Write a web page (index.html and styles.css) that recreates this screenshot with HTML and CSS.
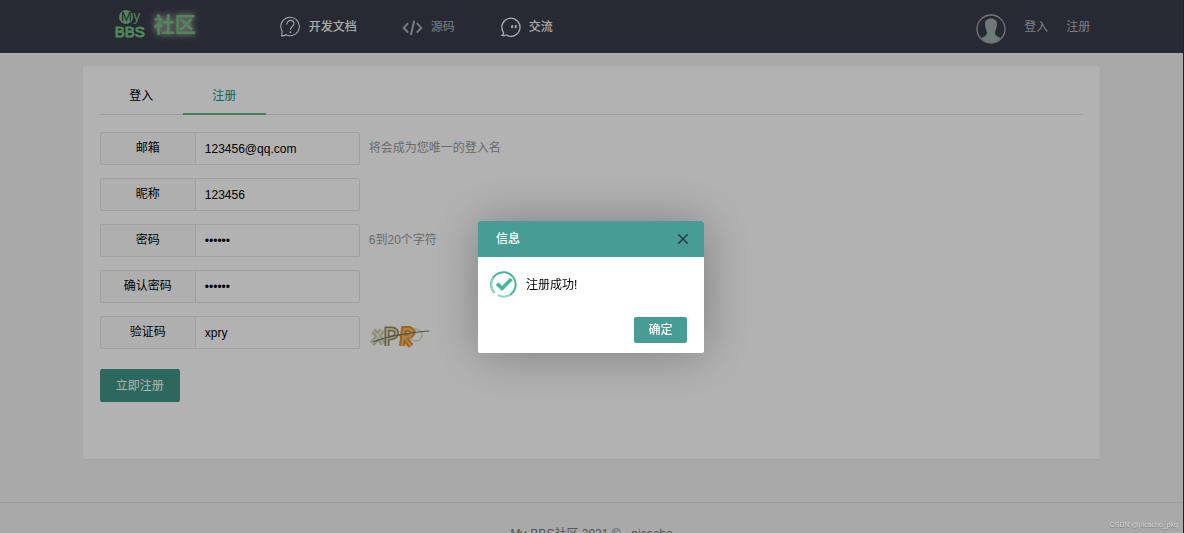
FILE: index.html
```html
<!DOCTYPE html>
<html lang="zh-CN">
<head>
<meta charset="utf-8">
<meta name="viewport" content="width=device-width, initial-scale=1">
<title>注册 - My BBS社区</title>
<link rel="stylesheet" href="styles.css">
</head>
<body>
<header class="header">
  <div class="header-inner">
    <a class="logo" href="#">
      <span class="logo-mark"><span class="logo-my"><span class="logo-m">M</span>y</span><span class="logo-bbs">BBS</span></span>
      <span class="logo-name">社区</span>
    </a>
    <nav class="nav">
      <a class="nav-link strong" href="#">
        <svg class="icon" viewBox="0 0 22 22"><path d="M1.700 20.800 2.300 16A9.700 9.700 0 1 1 6.200 19.600Q4.500 20.900 1.700 20.800Z"/><path d="M7.300 8.800C7.100 3.200 15.200 3.400 14.700 8.200C14.400 11 10.900 10.800 11 14.300"/><circle class="dot" cx="11" cy="17" r=".9"/></svg>
        开发文档</a>
      <a class="nav-link" href="#">
        <svg class="icon thick" viewBox="0 0 22 22"><path d="M6.500 7.500 1.800 12.500 6.500 17.500M15.500 7.500 20.200 12.500 15.500 17.500M12.800 5 9.300 20"/></svg>
        源码</a>
      <a class="nav-link strong" href="#">
        <svg class="icon chat" viewBox="0 0 22 22"><path d="M3.200 16.500A9.500 9.500 0 1 1 6.500 19.900Q4.500 21 2.200 20.300Q4.700 19 3.200 16.500Z"/><path class="eye" d="M13 9.500 12.400 12.700M16.800 9.500 16.200 12.700"/></svg>
        交流</a>
    </nav>
    <div class="account">
      <svg class="avatar" viewBox="0 0 30 30"><circle class="ring" cx="15" cy="15" r="14"/><path d="M9 9.500C9 2.800 21 2.800 21 9.500C21 14 19.500 16 19 18.500C18.900 21.500 21 22 24.500 24Q20.500 29 15 29Q9.500 29 5.500 24C9 22 11.100 21.500 11 18.500C10.500 16 9 14 9 9.500Z"/></svg>
      <a href="#">登入</a>
      <a href="#">注册</a>
    </div>
  </div>
</header>

<main class="card">
  <nav class="tabs">
    <a class="tab" href="#">登入</a>
    <a class="tab active" href="#">注册</a>
  </nav>
  <form class="form">
    <div class="row">
      <div class="field"><label for="email">邮箱</label><input id="email" type="text" value="123456@qq.com"></div>
      <span class="hint">将会成为您唯一的登入名</span>
    </div>
    <div class="row">
      <div class="field"><label for="nick">昵称</label><input id="nick" type="text" value="123456"></div>
    </div>
    <div class="row">
      <div class="field"><label for="pass">密码</label><input id="pass" type="password" value="123456"></div>
      <span class="hint">6到20个字符</span>
    </div>
    <div class="row">
      <div class="field"><label for="repass">确认密码</label><input id="repass" type="password" value="123456"></div>
    </div>
    <div class="row">
      <div class="field"><label for="code">验证码</label><input id="code" type="text" value="xpry"></div>
      <svg class="captcha" viewBox="0 0 62 32" role="img" aria-label="验证码图片">
        <path class="c-x" d="M4 12Q10 16 14 25M13 11Q9 19 3 25"/><path class="c-x-in" d="M4 12Q10 16 14 25M13 11Q9 19 3 25"/>
        <path class="c-p" d="M18 27V10H23Q29 11 27 16Q26 19 19 19"/><path class="c-p-in" d="M18 27V10H23Q29 11 27 16Q26 19 19 19"/>
        <path class="c-r" d="M33 27 35 10H40Q46 12 42 16Q40 18 35 18L42 27"/><path class="c-r-in" d="M33 27 35 10H40Q46 12 42 16Q40 18 35 18L42 27"/>
        <circle class="c-o" cx="47" cy="16" r="6"/>
        <path class="c-line" d="M4 23Q24 15 60 12"/>
      </svg>
    </div>
    <button class="btn submit" type="button">立即注册</button>
  </form>
</main>

<footer class="footer">My-BBS社区 2021 © &nbsp;-picacho</footer>

<div class="shade">
  <section class="dialog" role="dialog" aria-labelledby="dialog-title">
    <div class="dialog-head">
      <h2 id="dialog-title">信息</h2>
      <button class="close" type="button" aria-label="关闭"><svg viewBox="0 0 10 10"><path d="M1 1 9 9M9 1 1 9"/></svg></button>
    </div>
    <div class="dialog-body">
      <svg class="success" viewBox="0 0 28 28"><path class="arc" d="M4.300 22.800A12.300 12.300 0 1 1 20 24.800"/><path class="arc light" d="M7.800 25.200A12.300 12.300 0 0 0 20 24.800M4.300 22.800A12.300 12.300 0 0 1 3 8.500"/><path class="tick" d="M7 13.500 12 18.500 21.500 9"/></svg>
      <p>注册成功!</p>
    </div>
    <div class="dialog-foot"><button class="btn ok" type="button">确定</button></div>
  </section>
</div>
<div class="watermark">CSDN @picacho_pkq</div>
</body>
</html>
```
FILE: styles.css
```css
* { box-sizing: border-box; }

body {
  margin: 0;
  height: 100vh;
  overflow: hidden;
  border-right: 1px solid #222;
  background: #f2f2f2;
  color: #000;
  font: 12px/20px "Liberation Sans", "Noto Sans CJK SC", sans-serif;
}

a { color: inherit; text-decoration: none; }
button, input { font: inherit; }

.header { background: #393d49; color: #b4b5b9; }
.header-inner {
  display: flex;
  align-items: center;
  width: 86%;
  height: 53px;
  margin: 0 auto;
  padding: 0 10px 0 31px;
}

.logo { display: flex; align-items: center; gap: 8px; width: 166px; color: #74c07f; }
.logo-mark { display: flex; flex-direction: column; align-items: center; width: 32px; margin-top: -6px; }
.logo-my { font-size: 14px; line-height: 16px; }
.logo-m {
  display: inline-block;
  width: 14px;
  height: 14px;
  border-radius: 50%;
  background: #74c07f;
  color: #393d49;
  font-size: 13px;
  line-height: 14px;
  text-align: center;
}
.logo-bbs { font-size: 15px; line-height: 15px; -webkit-text-stroke: 1px #74c07f; }
.logo-name {
  margin-top: -4px;
  font-size: 21px;
  font-weight: 700;
  line-height: 28px;
  text-shadow: 0 0 5px #aaa, 0 0 8px #999;
}

.nav { display: flex; gap: 45px; flex: 1; }
.nav-link { display: flex; align-items: center; gap: 8px; }
.nav-link.strong { color: #f5f5f5; font-weight: 500; }
.icon { width: 21px; height: 21px; fill: none; stroke: currentColor; stroke-width: 1.1; }
.icon.thick { stroke-width: 2; }
.icon.chat { stroke-width: 1.4; }
.icon .dot { fill: currentColor; stroke: none; }
.icon .eye { stroke-width: 2; }

.account { display: flex; align-items: center; gap: 18px; }
.avatar { width: 30px; height: 30px; margin-top: 4px; fill: #a2acac; }
.avatar .ring { fill: none; stroke: #a2acac; stroke-width: 1.3; }

.card {
  width: 86%;
  min-height: 393px;
  margin: 13px auto 43px;
  padding: 13px 17px;
  border-radius: 2px;
  background: #fff;
  box-shadow: 0 1px 2px rgba(0, 0, 0, .05);
}
.tabs { display: flex; border-bottom: 1px solid #e2e2e2; }
.tab { width: 83px; margin-bottom: -1px; padding-top: 1px; border-bottom: 2px solid transparent; line-height: 33px; text-align: center; }
.tab.active { border-color: #5fb878; color: #009688; }

.form { display: flex; flex-direction: column; align-items: flex-start; gap: 13px; padding-top: 17px; }
.row { display: flex; align-items: center; gap: 9px; height: 33px; }
.field { display: flex; width: 260px; height: 33px; border: 1px solid #e6e6e6; border-radius: 2px; }
.field label { width: 95px; border-right: 1px solid #e6e6e6; background: #fbfbfb; line-height: 31px; text-align: center; }
.field input { flex: 1; min-width: 0; padding: 0 9px; border: 0; background: none; color: #000; outline: none; }
.hint { margin-top: -2px; color: #999; }

.captcha { width: 62px; height: 32px; margin-top: 4px; fill: none; }
.c-x { stroke: #c9caac; stroke-width: 6; }
.c-x-in { stroke: #ecebdc; stroke-width: 2; }
.c-p { stroke: #978a5a; stroke-width: 5; }
.c-p-in { stroke: #e0d9ba; stroke-width: 2; }
.c-r { stroke: #e58b25; stroke-width: 6; }
.c-r-in { stroke: #f4bd7a; stroke-width: 2; }
.c-o { stroke: #c3c5a4; }
.c-line { stroke: #687466; stroke-width: 1.2; }

.btn { border: 0; border-radius: 2px; background: #479d95; color: #fff; }
.submit { height: 33px; margin-top: 7px; padding: 0 16px; background: #419686; }

.footer { padding: 21px 0; border-top: 1px solid #e2e2e2; color: #777; text-align: center; }

.shade {
  position: fixed;
  inset: 0 1px 0 0;
  display: flex;
  align-items: center;
  justify-content: center;
  padding: 41px 1px 0 0;
  background: rgba(0, 0, 0, .3);
}
.dialog { width: 226px; border-radius: 2px; background: #fff; box-shadow: 1px 1px 50px rgba(0, 0, 0, .3); }
.dialog-head {
  display: flex;
  align-items: center;
  justify-content: space-between;
  height: 36px;
  padding: 0 15px 0 18px;
  border-radius: 2px 2px 0 0;
  background: #479d95;
  color: #fff;
}
.dialog-head h2 { margin: 0; font-size: 12px; font-weight: 500; }
.close { display: flex; padding: 0; border: 0; background: none; }
.close svg { width: 12px; height: 12px; fill: none; stroke: #2e3c48; stroke-width: 1.3; }
.dialog-body { display: flex; align-items: center; gap: 8px; padding: 13px 12px; }
.dialog-body p { margin: 2px 0 0; }
.success { width: 28px; height: 28px; fill: none; stroke: #4ab59b; }
.success .arc { stroke-width: 2; }
.success .light { stroke: #8fd6c3; }
.success .tick { stroke-width: 3.6; }
.dialog-foot { display: flex; justify-content: flex-end; padding: 6px 17px 10px; }
.ok { width: 53px; height: 26px; padding: 0; font-weight: 500; }

.watermark { position: fixed; right: 6px; bottom: 3px; color: #d5d5d5; font-size: 7px; line-height: 10px; text-shadow: 0 1px 1px #777; }
```
